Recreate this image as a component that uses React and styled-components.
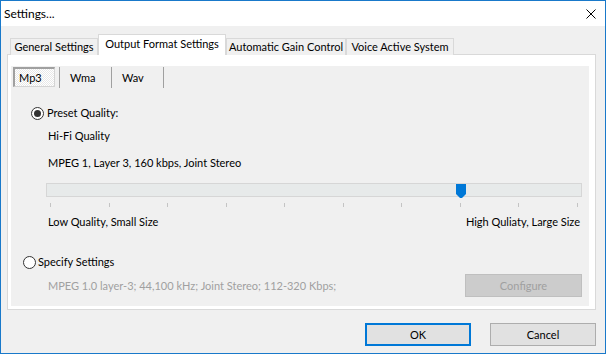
import React from 'react';
import styled, { createGlobalStyle } from 'styled-components';

const FONT = `"Lato", "Liberation Sans", Arial, sans-serif`;

const Global = createGlobalStyle`
  html, body { margin: 0; padding: 0; background: #f0f0f0; }
  body { font-family: ${FONT}; font-size: 11px; color: #000; }
  *, *::before, *::after { box-sizing: border-box; }
`;

const Window = styled.div`
  width: 606px;
  height: 354px;
  border: 1px solid #1979ca;
  background: #f0f0f0;
  display: flex;
  flex-direction: column;
`;

const TitleBar = styled.div`
  height: 25px;
  flex-shrink: 0;
  background: #fff;
  display: flex;
  align-items: center;
  justify-content: space-between;
  padding: 0 9px 0 3px;
`;

const Title = styled.span`
  font-size: 12px;
  line-height: 16px;
  margin-top: 1px;
`;

const CloseIcon = styled.svg`
  display: block;
  margin-top: 1px;
`;

const Body = styled.div`
  flex: 1;
  display: flex;
  flex-direction: column;
  padding: 8px 9px 0 6px;
`;

const TabStrip = styled.div`
  display: flex;
  align-items: flex-end;
  height: 21px;
  margin: 0 0 -1px 3px;
  position: relative;
  z-index: 1;
`;

const Tab = styled.div`
  width: ${(p) => p.$w}px;
  height: ${(p) => (p.$active ? 21 : 17)}px;
  border: 1px solid #d9d9d9;
  border-bottom: none;
  background: ${(p) => (p.$active ? '#fff' : '#f0f0f0')};
  display: flex;
  align-items: center;
  justify-content: center;
  padding-bottom: ${(p) => (p.$active ? 2 : 0)}px;
  white-space: nowrap;
  line-height: 16px;
`;

const Panel = styled.div`
  height: 256px;
  border: 1px solid #d9d9d9;
  background: #fff;
  padding: 11px 6px 3px 3px;
  display: flex;
`;

const Page = styled.div`
  flex: 1;
  background: #f0f0f0;
  display: flex;
  flex-direction: column;
`;

const SubTabs = styled.div`
  display: flex;
  height: 21px;
  margin: 1px 0 0 2px;
`;

const SubTab = styled.div`
  width: ${(p) => p.$w}px;
  height: 21px;
  border-right: 1px solid #a0a0a0;
  display: flex;
  align-items: ${(p) => (p.$active ? 'flex-start' : 'center')};
  padding-left: ${(p) => (p.$active ? 0 : 10)}px;
  line-height: 16px;
`;

const SubTabPressed = styled.div`
  width: 42px;
  height: 20px;
  border-top: 2px solid #a0a0a0;
  border-left: 2px solid #a0a0a0;
  border-right: 1px solid #d4d4d4;
  border-bottom: 1px solid #d4d4d4;
  background: repeating-conic-gradient(#ffffff 0 25%, #e8e8e8 0 50%) 0 0 / 2px 2px;
  display: flex;
  align-items: center;
  padding-left: 4px;
  line-height: 16px;
`;

const RadioRow = styled.label`
  display: flex;
  align-items: center;
  height: 16px;
  line-height: 16px;
  margin-top: ${(p) => p.$mt}px;
  padding-left: ${(p) => p.$pl}px;
  gap: ${(p) => p.$gap}px;
`;

const RadioCircle = styled.span`
  width: 13px;
  height: 13px;
  border-radius: 50%;
  border: 1px solid #333;
  background: #fff;
  display: inline-flex;
  align-items: center;
  justify-content: center;
  flex-shrink: 0;
  &::after {
    content: '';
    width: 7px;
    height: 7px;
    border-radius: 50%;
    background: #333;
    display: ${(p) => (p.$checked ? 'block' : 'none')};
  }
`;

const Line = styled.div`
  height: 16px;
  line-height: 16px;
  margin-top: ${(p) => p.$mt}px;
  padding-left: 37px;
  color: ${(p) => (p.$disabled ? '#a0a0a0' : '#000')};
  white-space: nowrap;
`;

const SliderWrap = styled.div`
  position: relative;
  width: 536px;
  margin: 12px 0 0 35px;
`;

const Track = styled.div`
  height: 14px;
  border: 1px solid #d6d6d6;
  background: #e7eaea;
`;

const Thumb = styled.svg`
  position: absolute;
  left: 410px;
  top: 1px;
  display: block;
`;

const Ticks = styled.div`
  display: flex;
  justify-content: space-between;
  width: 528px;
  margin: 6px 0 0 4px;
`;

const Tick = styled.span`
  width: 1px;
  height: 4px;
  background: #c4c4c4;
`;

const LabelRow = styled.div`
  display: flex;
  justify-content: space-between;
  height: 16px;
  line-height: 16px;
  margin-top: 7px;
  padding: 0 9px 0 37px;
`;

const DescRow = styled.div`
  display: flex;
  align-items: center;
  height: 23px;
  margin-top: 4px;
  padding: 0 7px 0 37px;
  color: #a0a0a0;
  white-space: nowrap;
  line-height: 16px;
`;

const BaseButton = styled.button`
  font-family: ${FONT};
  font-size: 11px;
  height: 23px;
  padding: 0;
  display: flex;
  align-items: center;
  justify-content: center;
  line-height: 16px;
`;

const ConfigureButton = styled(BaseButton)`
  width: 117px;
  margin-left: auto;
  background: #cccccc;
  border: 1px solid #bfbfbf;
  color: #a0a0a0;
`;

const ButtonRow = styled.div`
  display: flex;
  justify-content: flex-end;
  gap: 19px;
  margin-top: 13px;
`;

const DialogButton = styled(BaseButton)`
  width: 106px;
  background: #e1e1e1;
  color: #000;
  border: ${(p) => (p.$default ? '2px solid #0078d7' : '1px solid #adadad')};
`;

const TICKS = Array.from({ length: 10 });

export default function App() {
  return (
    <>
      <Global />
      <Window>
        <TitleBar>
          <Title>Settings...</Title>
          <CloseIcon width="10" height="10" viewBox="0 0 10 10">
            <path d="M0.5 0.5L9.5 9.5M9.5 0.5L0.5 9.5" stroke="#000" strokeWidth="1" fill="none" />
          </CloseIcon>
        </TitleBar>
        <Body>
          <TabStrip>
            <Tab $w={88}>General Settings</Tab>
            <Tab $w={128} $active>Output Format Settings</Tab>
            <Tab $w={120}>Automatic Gain Control</Tab>
            <Tab $w={108}>Voice Active System</Tab>
          </TabStrip>
          <Panel>
            <Page>
              <SubTabs>
                <SubTab $w={47} $active>
                  <SubTabPressed>Mp3</SubTabPressed>
                </SubTab>
                <SubTab $w={52}>Wma</SubTab>
                <SubTab $w={52}>Wav</SubTab>
              </SubTabs>

              <RadioRow $mt={17} $pl={20} $gap={3}>
                <RadioCircle $checked />
                Preset Quality:
              </RadioRow>
              <Line $mt={7}>Hi-Fi Quality</Line>
              <Line $mt={11}>MPEG 1, Layer 3, 160 kbps, Joint Stereo</Line>

              <SliderWrap>
                <Track />
                <Thumb width="10" height="14" viewBox="0 0 10 14">
                  <path d="M0 0H10V10L6 14H4L0 10Z" fill="#0078d7" />
                </Thumb>
                <Ticks>
                  {TICKS.map((_, i) => (
                    <Tick key={i} />
                  ))}
                </Ticks>
              </SliderWrap>

              <LabelRow>
                <span>Low Quality, Small Size</span>
                <span>High Quliaty, Large Size</span>
              </LabelRow>

              <RadioRow $mt={24} $pl={12} $gap={2}>
                <RadioCircle />
                Specify Settings
              </RadioRow>

              <DescRow>
                MPEG 1.0 layer-3; 44,100 kHz; Joint Stereo; 112-320 Kbps;
                <ConfigureButton disabled>Configure</ConfigureButton>
              </DescRow>
            </Page>
          </Panel>
          <ButtonRow>
            <DialogButton $default>OK</DialogButton>
            <DialogButton>Cancel</DialogButton>
          </ButtonRow>
        </Body>
      </Window>
    </>
  );
}
